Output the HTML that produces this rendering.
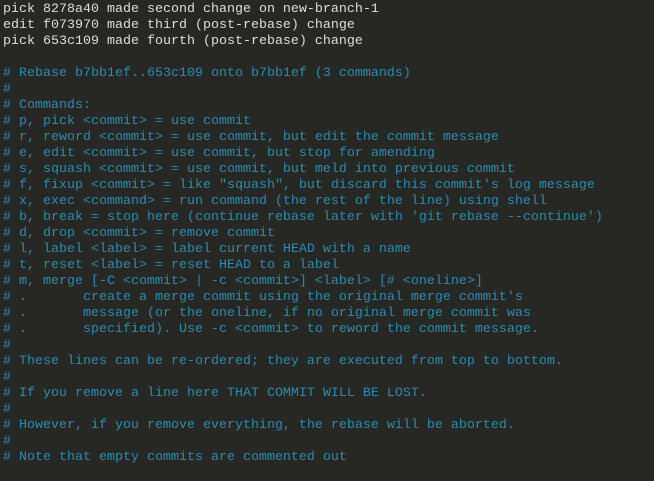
<!DOCTYPE html>
<html><head><meta charset="utf-8"><style>
html,body{margin:0;padding:0;background:#272723;width:654px;height:481px;overflow:hidden}
pre{margin:0;padding:0;position:absolute;left:3px;top:2px;font-family:"Liberation Mono","DejaVu Sans Mono",monospace;font-size:13.33px;line-height:16px;color:#dedede;white-space:pre}
.c{color:#2b8cb3}
</style></head><body><pre>pick 8278a40 made second change on new-branch-1
edit f073970 made third (post-rebase) change
pick 653c109 made fourth (post-rebase) change

<span class="c"># Rebase b7bb1ef..653c109 onto b7bb1ef (3 commands)
#
# Commands:
# p, pick &lt;commit&gt; = use commit
# r, reword &lt;commit&gt; = use commit, but edit the commit message
# e, edit &lt;commit&gt; = use commit, but stop for amending
# s, squash &lt;commit&gt; = use commit, but meld into previous commit
# f, fixup &lt;commit&gt; = like "squash", but discard this commit's log message
# x, exec &lt;command&gt; = run command (the rest of the line) using shell
# b, break = stop here (continue rebase later with 'git rebase --continue')
# d, drop &lt;commit&gt; = remove commit
# l, label &lt;label&gt; = label current HEAD with a name
# t, reset &lt;label&gt; = reset HEAD to a label
# m, merge [-C &lt;commit&gt; | -c &lt;commit&gt;] &lt;label&gt; [# &lt;oneline&gt;]
# .       create a merge commit using the original merge commit's
# .       message (or the oneline, if no original merge commit was
# .       specified). Use -c &lt;commit&gt; to reword the commit message.
#
# These lines can be re-ordered; they are executed from top to bottom.
#
# If you remove a line here THAT COMMIT WILL BE LOST.
#
# However, if you remove everything, the rebase will be aborted.
#
# Note that empty commits are commented out</span></pre></body></html>
